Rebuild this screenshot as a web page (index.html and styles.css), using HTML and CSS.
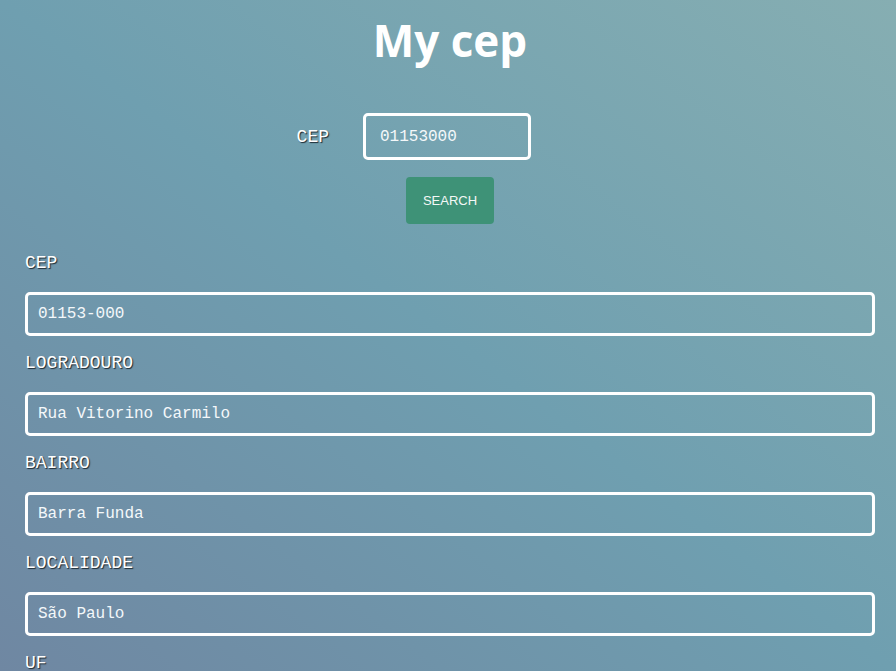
FILE: index.html
```html
<!DOCTYPE html>
<html lang="pt">
<head>
<meta charset="utf-8">
<title>My cep</title>
<link rel="stylesheet" href="styles.css">
</head>
<body>
<main class="page">
  <h1 class="title">My cep</h1>
  <form class="search">
    <div class="search-row">
      <label class="search-label" for="cep">CEP</label>
      <input class="search-input" id="cep" type="text" value="01153000">
      <span></span>
    </div>
    <button class="search-btn" type="button">SEARCH</button>
  </form>
  <section class="fields">
    <label class="field-label">CEP</label>
    <input class="field-input" type="text" value="01153-000">
    <label class="field-label">LOGRADOURO</label>
    <input class="field-input" type="text" value="Rua Vitorino Carmilo">
    <label class="field-label">BAIRRO</label>
    <input class="field-input" type="text" value="Barra Funda">
    <label class="field-label">LOCALIDADE</label>
    <input class="field-input" type="text" value="São Paulo">
    <label class="field-label">UF</label>
    <input class="field-input" type="text" value="SP">
  </section>
</main>
</body>
</html>
```
FILE: styles.css
```css
html, body {
  margin: 0;
  height: 100%;
  overflow: hidden;
}
body {
  background: linear-gradient(to top right, #6f87a2 0%, #6f9fb0 50%, #86aeb2 100%);
  font-family: "Liberation Mono", monospace;
  color: #fff;
}
.page {
  padding: 0 21px 0 25px;
}
.title {
  margin: 0;
  padding-top: 11px;
  font-family: "Open Sans", sans-serif;
  font-weight: 700;
  font-size: 44px;
  line-height: 58px;
  text-align: center;
  color: #fff;
}
.search {
  display: flex;
  flex-direction: column;
  align-items: center;
  margin-top: 44px;
}
.search-row {
  box-sizing: border-box;
  display: grid;
  grid-template-columns: 1fr auto 1fr;
  align-items: center;
  width: 100%;
  padding-right: 6px;
}
.search-label {
  justify-self: end;
  margin-right: 34px;
  font-size: 18px;
  text-shadow: 1px 1px 1px #1d2a33;
}
.search-input {
  box-sizing: border-box;
  width: 168px;
  height: 47px;
  padding: 0 14px;
  border: 3px solid #fff;
  border-radius: 5px;
  background: transparent;
  color: #f4f8fa;
  font-family: "Liberation Mono", monospace;
  font-size: 16px;
  outline: none;
}
.search-btn {
  margin-top: 17px;
  width: 88px;
  height: 47px;
  border: 0;
  border-radius: 4px;
  background: #3e9277;
  color: #f4f8f6;
  font-family: "Liberation Sans", Arial, sans-serif;
  font-size: 13px;
}
.fields {
  display: flex;
  flex-direction: column;
  margin-top: 29px;
}
.field-label {
  font-size: 18px;
  line-height: 20px;
  height: 20px;
  text-shadow: 1px 1px 1px #1d2a33;
  margin-bottom: 19px;
}
.field-input {
  box-sizing: border-box;
  width: 100%;
  height: 44px;
  padding: 0 10px;
  margin-bottom: 17px;
  border: 3px solid #fff;
  border-radius: 5px;
  background: transparent;
  color: #f4f8fa;
  font-family: "Liberation Mono", monospace;
  font-size: 16px;
  outline: none;
}
```
